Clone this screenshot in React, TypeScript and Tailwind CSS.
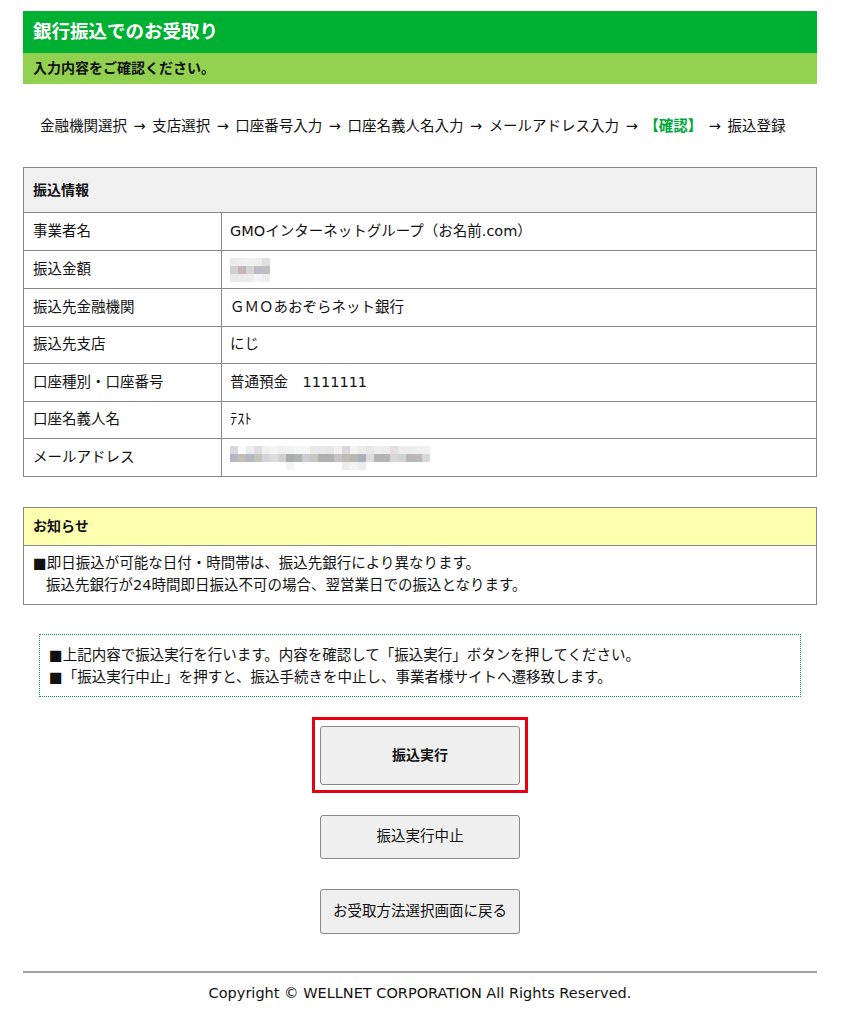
const font = { fontFamily: '"DejaVu Sans", "Noto Sans CJK JP", sans-serif' };

const amountCells = [
  ["#ebebeb", "#eeeef0", "#eff0f0", "#efefec", "#e0e0e0"],
  ["#cfcfcf", "#c4b4b8", "#d4d4d4", "#bdb9c9", "#c0c0c0"],
  ["#e8e8e8", "#ebebeb", "#ececec", "#f4f4f4", "#eeeeee"],
];

const emailCells = [
  ["#ddd5de", "#fafafa", "#ececec", "#dedede", "#f0f0f2", "#f4f4f4", "#eeeeee", "#f2f2f2", "#f6f6f6", "#f4f4f4", "#e8e8e8", "#e8e8e8", "#e6e6e6", "#f0f0f0", "#d8d8d8", "#f2f2f2", "#eaeaea", "#e6e6e6", "#eeeeee", "#ececec", "#e6dce6", "#ececec", "#ececec", "#eeeeee", "#f0f0f0"],
  ["#bcb4c4", "#c4c0b8", "#b4b8c4", "#c4c4b8", "#d4d4dc", "#dcdcd8", "#d0d0d4", "#acacac", "#b0b4b0", "#ccccd4", "#c8c8c0", "#b0b0b0", "#b0b0b0", "#c4c4c4", "#bcbcb4", "#b8b8b0", "#a8b0bc", "#dcdcd8", "#b4b4b4", "#b4b4b4", "#dcd4dc", "#d0d4d0", "#b8b8b8", "#c0b8b8", "#d8d8dc"],
  ["#ffffff", "#ffffff", "#ffffff", "#ffffff", "#ffffff", "#ffffff", "#ffffff", "#f4f4f4", "#ffffff", "#ffffff", "#ffffff", "#ffffff", "#ffffff", "#ffffff", "#ececec", "#f4f4f0", "#ececf0", "#ffffff", "#ffffff", "#ffffff", "#ffffff", "#ffffff", "#ffffff", "#ffffff", "#ffffff"],
];

// pixelated placeholder for masked values
function Mosaic({ cells }: { cells: string[][] }) {
  return (
    <div className="flex flex-col">
      {cells.map((row, i) => (
        <div key={i} className="flex">
          {row.map((c, j) => (
            <span key={j} className="block h-2 w-2" style={{ backgroundColor: c }} />
          ))}
        </div>
      ))}
    </div>
  );
}

const rows: { label: string; value: React.ReactNode; h: string }[] = [
  { label: "事業者名", value: "GMOインターネットグループ（お名前.com）", h: "h-[38px]" },
  { label: "振込金額", value: <Mosaic cells={amountCells} />, h: "h-[38px]" },
  { label: "振込先金融機関", value: "ＧＭＯあおぞらネット銀行", h: "h-[38px]" },
  { label: "振込先支店", value: "にじ", h: "h-[37px]" },
  { label: "口座種別・口座番号", value: "普通預金　1111111", h: "h-[38px]" },
  { label: "口座名義人名", value: "ﾃｽﾄ", h: "h-[37px]" },
  { label: "メールアドレス", value: <Mosaic cells={emailCells} />, h: "h-[38px]" },
];

const steps = ["金融機関選択", "支店選択", "口座番号入力", "口座名義人名入力", "メールアドレス入力"];

function Arrow() {
  return <span className="px-[6.5px]">→</span>;
}

export default function App() {
  return (
    <div className="min-h-[1015px] bg-white text-[14.5px] text-[#111]" style={font}>
      <div className="mx-[23px] w-[794px] pt-[11px]">
        {/* Title bars */}
        <div className="flex h-[42px] items-center bg-[#00b032] px-[10px] text-[18.5px] font-bold text-white">
          銀行振込でのお受取り
        </div>
        <div className="flex h-[31px] items-center bg-[#92d050] px-[10px] text-[14px] font-bold">
          入力内容をご確認ください。
        </div>

        {/* Steps */}
        <div className="flex h-[83px] items-center pl-[17px] pt-[3px]">
          {steps.map((s) => (
            <span key={s}>
              {s}
              <Arrow />
            </span>
          ))}
          <span className="font-bold text-[#00a63a]">【確認】</span>
          <Arrow />
          <span>振込登録</span>
        </div>

        {/* Transfer info */}
        <div className="border border-[#888]">
          <div className="flex h-[44px] items-center bg-[#f0f0f0] px-[9px] text-[14px] font-bold">振込情報</div>
          {rows.map((r) => (
            <div key={r.label} className={`flex ${r.h} border-t border-[#888]`}>
              <div className="flex w-[198px] items-center border-r border-[#888] px-[9px]">{r.label}</div>
              <div className="flex flex-1 items-center px-[8px]">{r.value}</div>
            </div>
          ))}
        </div>

        {/* Notice */}
        <div className="mt-[30px] border border-[#888]">
          <div className="flex h-[37px] items-center bg-[#ffffb0] px-[9px] text-[14px] font-bold">お知らせ</div>
          <div className="border-t border-[#888] px-[9px] pt-[6px] pb-[8px] leading-[22px]">
            <p>■即日振込が可能な日付・時間帯は、振込先銀行により異なります。</p>
            <p className="pl-[13px]">振込先銀行が24時間即日振込不可の場合、翌営業日での振込となります。</p>
          </div>
        </div>

        {/* Dotted instructions */}
        <div className="mx-[16px] mt-[29px] border border-dotted border-[#00a040] px-[9px] pt-[9px] pb-[8px] leading-[22px]">
          <p>■上記内容で振込実行を行います。内容を確認して「振込実行」ボタンを押してください。</p>
          <p>■「振込実行中止」を押すと、振込手続きを中止し、事業者様サイトへ遷移致します。</p>
        </div>

        {/* Buttons */}
        <div className="mt-[20px] flex flex-col items-center">
          <div className="border-[3px] border-[#e60012] px-[5px] pt-[6px] pb-[5px]">
            <button className="h-[59px] w-[200px] rounded-[3px] border border-[#8a8a8a] bg-[#efefef] text-[14px] font-bold">
              振込実行
            </button>
          </div>
          <button className="mt-[22px] h-[44px] w-[200px] rounded-[3px] border border-[#8a8a8a] bg-[#efefef]">
            振込実行中止
          </button>
          <button className="mt-[30px] h-[45px] w-[200px] rounded-[3px] border border-[#8a8a8a] bg-[#efefef]">
            お受取方法選択画面に戻る
          </button>
        </div>

        {/* Footer */}
        <div className="mt-[37px] border-t-2 border-[#a0a0a0] pt-[10px] text-center">
          Copyright © WELLNET CORPORATION All Rights Reserved.
        </div>
      </div>
    </div>
  );
}
